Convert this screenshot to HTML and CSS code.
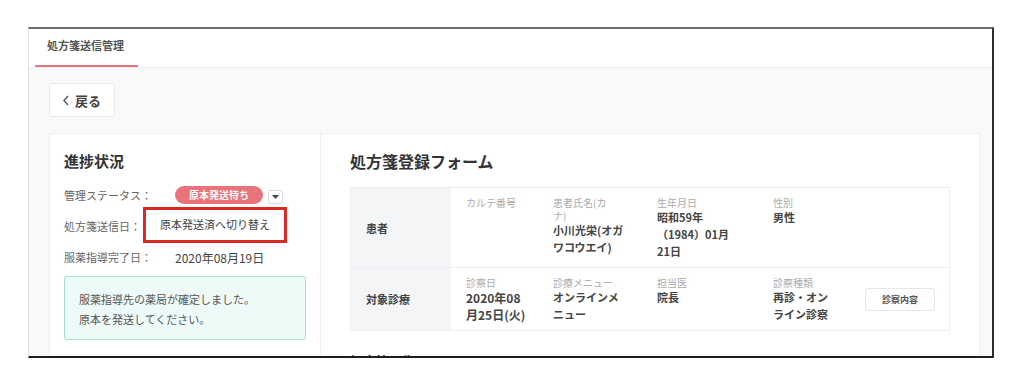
FILE: index.html
```html
<!DOCTYPE html>
<html lang="ja">
<head>
    <meta charset="UTF-8">
    <meta name="viewport" content="width=device-width, initial-scale=1.0">
    <title>処方箋送信管理</title>
    <link rel="stylesheet" href="styles.css">
</head>
<body>
    <div class="frame">
        <div class="tabs">
            <div class="tab active">処方箋送信管理</div>
        </div>

        <div class="main">
            <button class="back-button">
                <svg width="8" height="11" viewBox="0 0 8 11"><polyline points="6,1 2,5.5 6,10" fill="none" stroke="#555" stroke-width="1.4"/></svg>
                戻る
            </button>

            <div class="card">
                <aside class="progress">
                    <h3>進捗状況</h3>
                    <div class="status-row">
                        <span class="status-label">管理ステータス：</span>
                        <span class="badge">原本発送待ち</span>
                        <span class="caret-button">
                            <svg width="7" height="4" viewBox="0 0 7 4"><polygon points="0,0 7,0 3.5,4" fill="#444"/></svg>
                        </span>
                    </div>
                    <div class="status-row">
                        <span class="status-label">処方箋送信日：</span>
                        <span class="status-value"></span>
                    </div>
                    <div class="status-row">
                        <span class="status-label">服薬指導完了日：</span>
                        <span class="status-value">2020年08月19日</span>
                    </div>
                    <div class="info-box">
                        服薬指導先の薬局が確定しました。<br>
                        原本を発送してください。
                    </div>

                    <!-- ステータス切り替えメニュー (強調枠付き) -->
                    <div class="switch-menu">原本発送済へ切り替え</div>
                </aside>

                <section class="form-area">
                    <h3>処方箋登録フォーム</h3>
                    <div class="info-table">
                        <div class="table-row row-patient">
                            <div class="row-head">患者</div>
                            <div class="cell col-a">
                                <div class="cell-label">カルテ番号</div>
                            </div>
                            <div class="cell col-b">
                                <div class="cell-label">患者氏名(カ<br>ナ)</div>
                                <div class="cell-value">小川光栄(オガ<br>ワコウエイ)</div>
                            </div>
                            <div class="cell col-c">
                                <div class="cell-label">生年月日</div>
                                <div class="cell-value">昭和59年<br>（1984）01月<br>21日</div>
                            </div>
                            <div class="cell col-d">
                                <div class="cell-label">性別</div>
                                <div class="cell-value">男性</div>
                            </div>
                        </div>
                        <div class="table-row row-exam">
                            <div class="row-head">対象診療</div>
                            <div class="cell col-a">
                                <div class="cell-label">診察日</div>
                                <div class="cell-value large">2020年08<br>月25日(火)</div>
                            </div>
                            <div class="cell col-b">
                                <div class="cell-label">診療メニュー</div>
                                <div class="cell-value">オンラインメ<br>ニュー</div>
                            </div>
                            <div class="cell col-c">
                                <div class="cell-label">担当医</div>
                                <div class="cell-value">院長</div>
                            </div>
                            <div class="cell col-d with-button">
                                <div>
                                    <div class="cell-label">診察種類</div>
                                    <div class="cell-value">再診・オン<br>ライン診察</div>
                                </div>
                                <button class="detail-button">診察内容</button>
                            </div>
                        </div>
                    </div>
                    <h4>処方箋画像</h4>
                </section>
            </div>
        </div>
    </div>
</body>
</html>
```

FILE: styles.css
```css
body {
    margin: 0;
    padding: 27px 0 0 28px;
    background-color: #fff;
    font-family: "Noto Sans CJK JP", "Noto Sans", sans-serif;
    color: #333;
}
.frame {
    width: 966px;
    height: 331px;
    box-sizing: border-box;
    border-top: 2px solid #6e6e6e;
    border-right: 2px solid #2e2e2e;
    border-bottom: 2px solid #1e1e1e;
    border-left: 1px solid #e2e2e2;
    overflow: hidden;
    background-color: #fff;
}
.tabs {
    height: 38px;
    border-bottom: 1px solid #eceef1;
    display: flex;
    padding-left: 6px;
}
.tab {
    width: 103px;
    box-sizing: border-box;
    padding: 8px 0 0 12px;
    font-size: 11px;
    font-weight: bold;
    color: #555;
}
.tab.active {
    border-bottom: 2px solid #e2747c;
    height: 38px;
}
.main {
    background-color: #f7f9fa;
    padding: 15px 12px 0 20px;
    height: 300px;
}
.back-button {
    width: 66px;
    height: 34px;
    background-color: #fff;
    border: 1px solid #e7e9ec;
    border-radius: 3px;
    font-family: inherit;
    font-size: 13px;
    font-weight: bold;
    color: #444;
    display: flex;
    align-items: center;
    gap: 5px;
    padding: 0 0 0 12px;
}
.card {
    margin-top: 16px;
    background-color: #fff;
    border: 1px solid #eceef1;
    display: flex;
    height: 260px;
}
.progress {
    position: relative;
    width: 271px;
    box-sizing: border-box;
    border-right: 1px solid #eceef1;
    padding: 16px 14px 0 14px;
}
.progress h3 {
    margin: 0 0 12px;
    font-size: 15px;
    line-height: 22px;
    font-weight: bold;
    color: #333;
}
.status-row {
    display: flex;
    align-items: center;
    height: 22px;
    margin-bottom: 9px;
}
.status-label {
    width: 111px;
    font-size: 11px;
    color: #666;
}
.status-value {
    font-size: 12px;
    color: #444;
}
.badge {
    width: 88px;
    height: 18px;
    line-height: 18px;
    text-align: center;
    border-radius: 9px;
    background-color: #e9737b;
    color: #fff;
    font-size: 10px;
    font-weight: bold;
}
.caret-button {
    margin-left: 5px;
    margin-top: 4px;
    width: 15px;
    height: 14px;
    box-sizing: border-box;
    border: 1px solid #ddd;
    border-radius: 2px;
    display: flex;
    align-items: center;
    justify-content: center;
}
.info-box {
    margin-top: -1px;
    width: 242px;
    height: 64px;
    box-sizing: border-box;
    background-color: #eefaf8;
    border: 1px solid #a9ddd4;
    border-radius: 3px;
    padding: 12px 14px;
    font-size: 11px;
    line-height: 20px;
    color: #555;
}
.switch-menu {
    position: absolute;
    left: 93px;
    top: 73px;
    width: 144px;
    height: 36px;
    box-sizing: border-box;
    border: 3px solid #d82a22;
    background-color: #fff;
    font-size: 11px;
    color: #444;
    text-align: center;
    padding-top: 6px;
}
.form-area {
    flex: 1;
    padding: 16px 0 0 29px;
}
.form-area h3 {
    margin: 0 0 15px;
    font-size: 16px;
    line-height: 22px;
    font-weight: bold;
    color: #333;
}
.form-area h4 {
    margin: 20px 0 0;
    font-size: 13px;
    font-weight: bold;
    color: #333;
}
.info-table {
    width: 600px;
    border: 1px solid #eceef1;
    box-sizing: border-box;
}
.table-row {
    display: flex;
}
.row-patient {
    height: 79px;
    border-bottom: 1px solid #eceef1;
}
.row-exam {
    height: 62px;
}
.row-head {
    width: 100px;
    flex-shrink: 0;
    background-color: #f3f5f7;
    display: flex;
    align-items: center;
    padding-left: 15px;
    box-sizing: border-box;
    font-size: 11px;
    font-weight: bold;
    color: #444;
}
.cell {
    box-sizing: border-box;
    padding: 8px 0 0 15px;
}
.col-a { width: 87px; }
.col-b { width: 104px; }
.col-c { width: 116px; }
.col-d { flex: 1; }
.cell.with-button {
    display: flex;
    justify-content: space-between;
    padding-right: 14px;
}
.cell-label {
    font-size: 10px;
    line-height: 13px;
    color: #aaa;
}
.cell-value {
    font-size: 11px;
    line-height: 17px;
    font-weight: bold;
    color: #444;
}
.cell-value.large {
    font-size: 12px;
}
.detail-button {
    align-self: center;
    margin-top: -8px;
    width: 70px;
    height: 23px;
    background-color: #fff;
    border: 1px solid #e4e6e9;
    border-radius: 3px;
    font-family: inherit;
    font-size: 9px;
    font-weight: bold;
    color: #555;
}
```
